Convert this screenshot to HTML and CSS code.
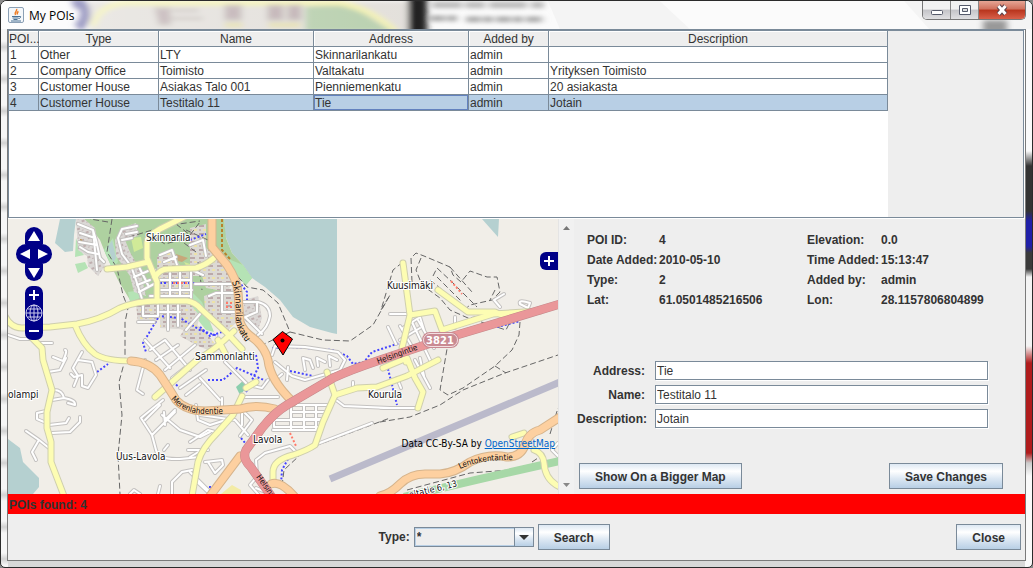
FILE: index.html
```html
<!DOCTYPE html>
<html lang="en">
<head>
<meta charset="UTF-8">
<title>My POIs</title>
<link rel="stylesheet" href="styles.css">
</head>
<body>

<div class="window">

<!-- title bar -->
<div class="titlebar">
    <svg class="glass" viewBox="0 0 1033 29" preserveAspectRatio="none" aria-hidden="true">
        <defs>
            <filter id="soft" x="-10%" y="-50%" width="120%" height="200%"><feGaussianBlur stdDeviation="3 2"/></filter>
            <linearGradient id="shine" x1="0" x2="1">
                <stop offset="0" stop-color="#fff" stop-opacity=".9"/>
                <stop offset=".09" stop-color="#fff" stop-opacity=".3"/>
                <stop offset="1" stop-color="#fff" stop-opacity="0"/>
            </linearGradient>
        </defs>
        <rect width="1033" height="29" fill="#fbfbfb"/>
        <g filter="url(#soft)">
            <path d="M88 0H410V32H88z" fill="#e3e0db"/>
            <path d="M305 6L350 4L392 32H305z" fill="#b9d0af"/>
            <path d="M92 26Q98 4 125 2H340Q370 8 396 32" fill="none" stroke="#f3f1b4" stroke-width="6"/>
            <path d="M155 8h14v16h-10zM170 18h32M172 10h26M225 5h15v14h-15zM268 5h14v14h-14zM288 5h12v14h-12z" fill="#c0b0b4" stroke="#c8c0bc" stroke-width="3"/>
            <path d="M224 25h18M268 25h32" stroke="#e5dea0" stroke-width="4"/>
            <path d="M72 4q10-5 12 6q2 10-7 18" fill="none" stroke="#7d7bb0" stroke-width="10"/>
            <path d="M408 -4h19v40h-19z" fill="#222"/>
            <path d="M432 4h112" stroke="#bbb" stroke-width="7" stroke-dasharray="30 3 20 4 38 4"/>
            <path d="M430 18h30M466 19h78" stroke="#aaa" stroke-width="6" stroke-dasharray="15 2 10 3"/>
            <path d="M984 20h24v14h-24z" fill="#444"/>
        </g>
        <path d="M548 0H660L690 29H560zM905 0H1033V29H930z" fill="#eee" opacity=".5"/>
        <rect width="420" height="29" fill="url(#shine)"/>
    </svg>
    <svg class="java" viewBox="0 0 16 16" aria-hidden="true">
        <rect x=".5" y=".5" width="15" height="15" rx="1.5" fill="#f4f7fa" stroke="#8ba0b5"/>
        <path d="M8.500 2C10 4 5.500 5 7.500 8M10.500 4.500C8.500 5.500 9 6.500 9.500 7.500" fill="none" stroke="#ee7b22" stroke-width="1.500"/>
        <path d="M4 9.500h7M4.500 11h6M5.500 12.500h4M11 9.500q2.500-.5 1.500 1q-.5 1-2 1M3 14h10" fill="none" stroke="#4a7296"/>
    </svg>
    <h1 class="caption">My POIs</h1>
    <div class="winbuttons">
        <button class="win" aria-label="Minimize"><svg width="14" height="16" viewBox="0 0 14 16"><rect x="1.500" y="8.500" width="11" height="4" rx="1" fill="#fff" stroke="#555a6a"/></svg></button>
        <button class="win" aria-label="Maximize"><svg width="14" height="16" viewBox="0 0 14 16"><path d="M1.500 3.500h11v9h-11z" fill="#fff" stroke="#555a6a"/><path d="M4.500 6.500h5v3h-5z" fill="#ddd" stroke="#555a6a"/></svg></button>
        <button class="win close" aria-label="Close window"><svg width="14" height="16" viewBox="0 0 14 16"><path d="M3.500 4L10.500 12M10.500 4L3.500 12" stroke="#5a4048" stroke-width="5"/><path d="M3.500 4L10.500 12M10.500 4L3.500 12" stroke="#fff" stroke-width="3"/></svg></button>
    </div>
</div>

<div class="client">

<!-- list of POIs -->
<div class="list">
    <div class="sheet">
    <table class="pois">
        <colgroup><col class="c-id"><col class="c-type"><col class="c-name"><col class="c-name"><col class="c-by"><col></colgroup>
        <thead>
            <tr><th>POI...</th><th>Type</th><th>Name</th><th>Address</th><th>Added by</th><th>Description</th></tr>
        </thead>
        <tbody>
            <tr><td>1</td><td>Other</td><td>LTY</td><td>Skinnarilankatu</td><td>admin</td><td></td></tr>
            <tr><td>2</td><td>Company Office</td><td>Toimisto</td><td>Valtakatu</td><td>admin</td><td>Yrityksen Toimisto</td></tr>
            <tr><td>3</td><td>Customer House</td><td>Asiakas Talo 001</td><td>Pienniemenkatu</td><td>admin</td><td>20 asiakasta</td></tr>
            <tr class="selected"><td>4</td><td>Customer House</td><td>Testitalo 11</td><td class="focused">Tie</td><td>admin</td><td>Jotain</td></tr>
        </tbody>
    </table>
    </div>
    <div class="filler"></div>
</div>

<div class="lower">

<!-- map -->
<div class="map">
    <svg class="tiles" viewBox="8 219 550 275" preserveAspectRatio="xMidYMid slice" role="img" aria-label="Map">
        <defs>
            <pattern id="houses" width="7" height="6" patternUnits="userSpaceOnUse" patternTransform="rotate(-20)">
                <rect width="7" height="6" fill="#dbd8d6"/>
                <rect x="1" y="1" width="3" height="2" fill="#bfaeae"/>
                <rect x="5" y="4" width="2" height="1" fill="#c4b6b6"/>
            </pattern>
            <pattern id="blocks" width="9" height="8" patternUnits="userSpaceOnUse">
                <rect width="9" height="8" fill="#dcd9d4"/>
                <rect x="1" y="1" width="5" height="2" fill="#bba9a9"/>
                <rect x="5" y="5" width="3" height="2" fill="#ece2a8"/>
                <rect x="1" y="5" width="2" height="2" fill="#c9b9b5"/>
            </pattern>
            <g id="minor">
                <path d="M78 224L93 230L96 240L100 258L104 262M80 233L95 238M79 242L97 245M80 247L88 252L98 254M93 230L97 270"/>
                <path d="M137 226L122 229L118 238L122 254L131 266L136 280L142 299M137 232L126 234M122 240L132 238M138 265L148 285M134 277L148 271M137 285L150 280M139 292L154 284"/>
                <path d="M155 283V270M160 255L172 250L178 268M164 262L176 257M170 268V295M180 268V296M191 270V298M160 280H191M160 290H192M150 296H190"/>
                <path d="M143 316V303M143 316H158V303M168 302V330M178 303V326M160 312H180M186 330L200 314M138 322H154"/>
                <path d="M190 245L203 240L206 256M203 275L192 270M195 284H232M209 296L216 293H238M222 286V312M243 302H258Q270 305 270 316Q268 328 258 335M222 312H240M246 318L262 334M257 302V312L243 318"/>
                <path d="M8 335L20 339H32M40 343H52M53 357L63 361Q68 350 65 350M82 352L73 368L78 376L74 386M78 360L92 362L96 375L88 388L82 386L82 375L74 377L71 374"/>
                <path d="M48 372L60 370L66 358M52 390Q62 389 64 398L52 400M64 398Q76 400 75 405L68 403M46 411L37 413V419L44 422M49 425L66 423L69 418M52 433L70 432L80 422L80 417M49 448L39 440L26 431M39 440L32 452L36 460"/>
                <path d="M145 340L170 368M150 350L165 340L190 370M156 360L178 345M165 370L195 345M172 378L200 356M180 388L206 370M186 395L200 384M145 360L137 390L143 394M150 368L160 376"/>
                <path d="M163 400L141 418L152 435L156 450Q158 460 180 459L200 457M152 435L175 412M145 420L160 405M162 415L180 430L200 437L210 432M165 425L164 412M175 410L165 420M188 450H208M164 450L168 445M198 420L210 425L232 418M196 405L198 420"/>
                <path d="M200 378L220 400M200 415L235 420L248 435M222 411V398M242 425V410L252 420L240 436M243 397H278M190 442L208 430L215 432M190 457L205 448M205 462L222 460L223 465L215 473L208 462M190 472L208 490M172 494L172 482L182 472L192 470M158 494L160 486M130 494L134 490L140 494M195 480L210 494"/>
                <path d="M272 355L275 346L305 347L338 352L345 360L340 370L305 380L292 376L275 362M287 380L288 367M305 370L303 358L310 360L313 368M318 366L317 358L325 362M330 366L329 356L337 360M225 362L248 385L262 388L268 380M275 380L282 374"/>
                <path d="M273 420H322V427H274V420M291 405H328M291 405V430M304 405V430M316 405V430M291 412H326M291 419H323M273 430H318M317 444L372 423M257 475L256 460L265 453L290 446L296 452M256 478L250 485L258 494M336 400L344 406L390 408M353 382V390M380 408H418"/>
                <path d="M390 314H410M388 327L396 344M403 328L420 317L424 330M400 326L414 350M412 322L430 360M418 320L434 348M400 340L420 328M408 350L424 344M415 360L430 388M420 358L424 376M455 317V328M500 307L494 300L504 294M520 304Q518 299 530 303L528 308L520 304M397 378L401 388"/>
                <path d="M558 443L552 450L558 456M270 494L256 488"/>
            </g>
            <g id="yellow">
                <path d="M4 314Q10 328 22 328L50 327L77 324Q100 320 120 308Q137 301 157 301H187Q195 302 201 309L227 333L242 349"/>
                <path d="M75 325Q83 345 95 354Q105 361 133 361"/>
                <path d="M30 336L42 348L43 360L52 390L47 412V428L51 442V462L64 496"/>
                <path d="M107 269L127 267L148 262M184 217L160 229Q147 236 147 242V258L157 282V301"/>
                <path d="M155 277Q160 269 168 269L196 268Q206 265 214 258"/>
                <path d="M234 331Q215 350 197 360L155 397M226 355L218 340M246 388L256 382"/>
                <path d="M242 396L233 415L217 433Q202 448 198 462L192 496"/>
                <path d="M327 372L335 395L323 422L315 445Q308 450 293 455Q273 460 273 472V483"/>
                <path d="M335 395L357 388L377 387L407 376L438 360M383 368L407 358L415 378L423 392L418 408"/>
                <path d="M403 263L410 315L402 348L406 362M410 315L435 311L442 330L493 314L540 311"/>
                <path d="M438 290L468 312H495L506 317M534 450Q543 453 544 463Q545 480 560 487M512 437L524 433"/>
            </g>
            <g id="orange">
                <path d="M212 217V247L227 265Q237 280 238 292L240 322Q243 331 253 338Q265 347 268 360Q270 380 293 402"/>
                <path d="M131 361Q150 362 160 375Q170 390 176 400Q186 411 205 411L240 409Q256 404 275 409"/>
                <path d="M240 456L210 496M271 484Q280 480 294 496"/>
                <path d="M380 496Q390 494 400 484Q410 474 425 474H440Q455 473 470 462Q488 453 507 457Q521 457 525 445Q528 433 540 430L560 417"/>
            </g>
            <path id="red" d="M560 304L497 323L440 340L380 360Q350 370 333 378L287 405Q275 412 262 428L246 450Q242 458 250 466L274 500"/>
        </defs>

        <rect x="8" y="219" width="550" height="275" fill="#f1eee8"/>
        <path d="M60 219L55 243L65 252L73 251L74 235L76 219zM224 219H337V334L332 333L310 327L293 317L280 300L265 287L252 278L243 265L232 253L225 235zM482 219H499L498 237L490 228zM8 439L20 448L23 462L39 478V487L33 494H8z" fill="#b5d0d0"/>

        <!-- woods and parks -->
        <path d="M84 219H224L226 238L232 253L243 265L252 278L246 285L236 275L226 290L228 300L212 296L205 310L190 322L180 315L170 300L150 303L130 300L118 280L106 255L100 240z" fill="#aed1a0"/>
        <path d="M75 264L85 262L88 268L78 273zM76 238L80 250L84 255L75 257zM128 292L142 290L140 298L130 302z" fill="#b5e3b5"/>
        <path d="M226 258L243 265L252 278L246 285L236 275zM104 250L113 238L118 262L112 268zM190 290L202 302L214 332L206 330L194 315zM244 316L254 310L256 322L246 320z" fill="#b5e3b5"/>
        <path d="M131 238L141 237L143 248L134 252zM184 262l12 4l-6 6z" fill="#d0ea98"/>
        <path d="M108 247L113 262L116 258L112 240z" fill="#b5d0d0"/>
        <path d="M176 254L188 258L182 262L178 261z" fill="#c7a77a"/>
        <path d="M236 387l8-7l4 6l-8 9z" fill="#8ccfae"/>
        <path d="M221 494L232 485L241 490V494z" fill="#f3eba5"/>

        <!-- built up areas -->
        <path d="M76 219H84L95 228L98 245L105 266L98 276L88 266L87 256L78 250z" fill="url(#houses)"/>
        <path d="M115 240L122 228L136 223L138 236L125 240L130 252L140 270L146 296L134 292L130 276L116 256z" fill="url(#houses)"/>
        <path d="M157 257L172 250L180 266H192V298H158z" fill="url(#blocks)"/>
        <path d="M136 304H157V322L138 324zM160 304H190L200 316L196 330L160 328z" fill="url(#blocks)"/>
        <path d="M190 228L206 224V248L224 264L232 282L228 292L206 288L202 276H190z" fill="url(#blocks)"/>
        <path d="M204 296L222 290L236 288L237 322L228 330L205 310z" fill="url(#blocks)"/>
        <path d="M244 300L258 296L262 318L258 330L244 320z" fill="url(#houses)"/>
        <path d="M180 336L190 320L204 330L220 350L208 350L198 346z" fill="url(#blocks)"/>

        <path d="M84 234l3 3M80 240l2 1M222 219V250L230 259" fill="none" stroke="#b8822a" stroke-width="2" stroke-dasharray="3 2"/>
        <path d="M330 479L560 382" stroke="#bbbacb" stroke-width="7"/>

        <!-- footpaths -->
        <g class="track">
            <path d="M112 219L107 252L117 268L123 295L128 308L125 322V360L119 382L122 415L118 455L120 494"/>
            <path d="M232 270L247 287L263 290L278 303L290 332L323 340L350 341L373 325L390 295L381 310L393 270L403 262M290 332L262 345"/>
            <path d="M412 282L411 258L416 253L424 256L450 267L453 275L461 282L470 271L487 277L497 277L500 292L492 300L470 305L462 312M421 258L416 270L422 285L440 298L450 310L468 318L490 315"/>
            <path d="M433 276L437 268L452 282L477 307M437 277L462 302M430 280L445 292M455 325L475 320L506 330L512 318M495 290L490 300M450 267L472 292"/>
            <path d="M520 322L519 335L512 350L495 366L463 388L448 395L440 390L447 349M495 366L506 373M380 422L410 417L440 405L463 390L505 373L558 355M315 446L390 418M282 486L284 470L300 455"/>
            <path d="M407 490L470 473L510 470M550 434L558 408M532 462L544 454"/>
            <path d="M120 240L165 226L200 221M152 236L165 244L180 240L196 252M186 230L208 240M198 262L202 290M108 222L90 219M176 224L190 235L200 222"/>
        </g>
        <g class="cycle">
            <path d="M158 318L143 343L146 352M158 316L180 318L200 330L218 336M194 283H240L247 292V302M160 283H200M190 240L206 234M272 348L292 347L333 350L347 356L353 364L364 362L372 352L400 343"/>
            <path d="M208 380L223 380L237 368L266 381M256 355L258 368L252 380M290 371L313 376M387 365L397 405M288 459L282 470L281 484M497 327L520 321M97 372L108 364M200 327L210 336L222 332M241 438L246 444M246 392L250 384M210 486V494M173 382L180 388"/>
        </g>

        <!-- roads -->
        <use href="#minor" class="road minor-edge"/>
        <use href="#minor" class="road minor-fill"/>
        <path d="M404 497L480 479L560 461" fill="none" stroke="#a7d8a7" stroke-width="8"/>
        <use href="#yellow" class="road yellow-edge"/>
        <use href="#yellow" class="road yellow-fill"/>
        <use href="#orange" class="road orange-edge"/>
        <use href="#orange" class="road orange-fill"/>
        <use href="#red" class="road red-edge"/>
        <use href="#red" class="road red-fill"/>
        <path d="M173 283H188M227 302V310M231 302V310M451 281L462 294M290 433L296 446" fill="none" stroke="#ff7a6a" stroke-width="2" stroke-dasharray="2 2"/>

        <!-- place and street names -->
        <g class="place">
            <text x="146" y="241">Skinnarila</text>
            <text x="195" y="360">Sammonlahti</text>
            <text x="387" y="289">Kuusimäki</text>
            <text x="368" y="398">Kourula</text>
            <text x="253" y="443">Lavola</text>
            <text x="116" y="460">Uus-Lavola</text>
            <text x="8" y="398">olampi</text>
        </g>
        <defs>
            <path id="n1" d="M232 282Q236 292 236 322Q240 340 260 356"/>
            <path id="n2" d="M171 399Q184 414 205 414H236"/>
            <path id="n3" d="M378 364L430 345"/>
            <path id="n4" d="M460 469Q485 457 526 461"/>
            <path id="n5" d="M410 498L475 482"/>
            <path id="n6" d="M256 477L286 519"/>
        </defs>
        <g class="street">
            <text class="long"><textPath href="#n1">Skinnarilankatu</textPath></text>
            <text><textPath href="#n2">Merenlahdentie</textPath></text>
            <text><textPath href="#n3">Helsingintie</textPath></text>
            <text><textPath href="#n4">Lentokentäntie</textPath></text>
            <text><textPath href="#n6">Helsingintie</textPath></text>
            <text class="trunk"><textPath href="#n5">altatie 6, 13</textPath></text>
        </g>
        <rect x="422" y="332" width="37" height="16" rx="8" fill="#c98a92"/>
        <rect x="423.500" y="333.500" width="34" height="13" rx="6.500" fill="none" stroke="#f3dfe1"/>
        <text class="shield" x="440" y="344">3821</text>

        <path d="M282.500 331.500L292.500 339L283 355L273 339.500z" fill="#f00" stroke="#000"/>
        <circle cx="282.500" cy="340.500" r="2" fill="#000"/>
    </svg>

    <div class="controls">
        <div class="pan">
            <button class="nav up" aria-label="Pan up"><svg width="12" height="10" viewBox="0 0 12 10"><path d="M6 0L12 10H0z"/></svg></button>
            <div class="sides">
                <button class="nav left" aria-label="Pan left"><svg width="10" height="12" viewBox="0 0 10 12"><path d="M0 6L10 1V11z"/></svg></button>
                <button class="nav right" aria-label="Pan right"><svg width="10" height="12" viewBox="0 0 10 12"><path d="M10 6L0 1V11z"/></svg></button>
            </div>
            <button class="nav down" aria-label="Pan down"><svg width="12" height="10" viewBox="0 0 12 10"><path d="M6 10L12 0H0z"/></svg></button>
        </div>
        <div class="zoom">
            <button class="nav" aria-label="Zoom in"><svg width="10" height="10" viewBox="0 0 10 10"><path d="M4 0h2v4h4v2H6v4H4V6H0V4h4z"/></svg></button>
            <button class="nav" aria-label="Zoom to world"><svg width="18" height="18" viewBox="0 0 18 18"><g fill="none" stroke="#ccccec"><circle cx="9" cy="9" r="8"/><ellipse cx="9" cy="9" rx="4" ry="8"/><path d="M9 1V17M1 9H17M2.500 5H15.500M2.500 13H15.500"/></g></svg></button>
            <button class="nav" aria-label="Zoom out"><svg width="10" height="10" viewBox="0 0 10 10"><path d="M0 4h10v2H0z"/></svg></button>
        </div>
    </div>
    <button class="nav layers" aria-label="Show layers"><svg width="10" height="10" viewBox="0 0 10 10"><path d="M4 0h2v4h4v2H6v4H4V6H0V4h4z"/></svg></button>
    <p class="credit">Data CC-By-SA by <a href="#">OpenStreetMap</a></p>
</div>

<div class="scroll">
    <svg width="7" height="4" viewBox="0 0 7 4"><path d="M3.500 0L7 4H0z" fill="#777"/></svg>
    <svg width="7" height="4" viewBox="0 0 7 4"><path d="M3.500 4L7 0H0z" fill="#888"/></svg>
</div>

<!-- details of the selected POI -->
<div class="details">
    <dl class="facts">
        <dt>POI ID:</dt><dd>4</dd><dt>Elevation:</dt><dd>0.0</dd>
        <dt>Date Added:</dt><dd>2010-05-10</dd><dt>Time Added:</dt><dd>15:13:47</dd>
        <dt>Type:</dt><dd>2</dd><dt>Added by:</dt><dd>admin</dd>
        <dt>Lat:</dt><dd>61.0501485216506</dd><dt>Lon:</dt><dd>28.1157806804899</dd>
    </dl>
    <form class="edit">
        <label for="address">Address:</label><input type="text" id="address" value="Tie">
        <label for="name">Name:</label><input type="text" id="name" value="Testitalo 11">
        <label for="description">Description:</label><input type="text" id="description" value="Jotain">
    </form>
    <div class="actions">
        <button class="btn">Show On a Bigger Map</button>
        <button class="btn">Save Changes</button>
    </div>
</div>

</div>

<div class="status">POIs found: 4</div>

<!-- search -->
<div class="footer">
    <div class="search">
        <label for="type">Type:</label>
        <div class="combo">
            <select id="type"><option>*</option></select>
            <span class="arrow"><svg width="10" height="5" viewBox="0 0 10 5"><path d="M0 0H10L5 5z" fill="#333"/></svg></span>
        </div>
        <button class="btn">Search</button>
    </div>
    <button class="btn">Close</button>
</div>

</div>
</div>

</body>
</html>
```

FILE: styles.css
```css
* {
    box-sizing: border-box;
}

body {
    margin: 0;
    background-color: #8a8a8a;
    font-family: "Liberation Sans", Arial, sans-serif;
    font-size: 12px;
    color: #333;
}

button, input, select {
    font-family: inherit;
    font-size: 12px;
    color: #333;
    margin: 0;
}

.window {
    display: flex;
    flex-direction: column;
    min-height: 100vh;
    border: 1px solid #2b2b2b;
    border-radius: 7px 7px 5px 5px;
    overflow: hidden;
    padding: 0 6px 6px;
    background:
        linear-gradient(#fafafa 0 150px, #333 165px 210px, #2020a8 220px 245px, #3a3a3a 252px 268px, #f4f4f4 276px 345px, #b01c1c 362px 452px, #ccc 462px, #fafafa 475px) right / 7px 100% no-repeat,
        repeating-linear-gradient(#f6f6f6 0 8px, #d2d2d2 14px, #f6f6f6 20px 32px) left / 7px 100% no-repeat,
        linear-gradient(#e6e6e6, #d8d8d8);
}

/* title bar */
.titlebar {
    position: relative;
    display: flex;
    align-items: center;
    height: 28px;
    margin: 0 -6px;
    padding-left: 7px;
}

.glass {
    position: absolute;
    top: 0;
    left: 0;
    width: 100%;
    height: 100%;
}

.java {
    position: relative;
    width: 16px;
    height: 16px;
}

.caption {
    position: relative;
    flex: 1;
    margin: 0 0 0 5px;
    font: 12px "Open Sans", sans-serif;
    color: #000;
}

.winbuttons {
    position: relative;
    align-self: flex-start;
    display: flex;
    height: 19px;
    margin-right: 6px;
    border: 1px solid #777;
    border-top: 0;
    border-radius: 0 0 5px 5px;
    overflow: hidden;
}

.win {
    display: flex;
    align-items: center;
    justify-content: center;
    width: 28px;
    padding: 0;
    border: 0;
    border-right: 1px solid #888;
    background: linear-gradient(#f2f2f2 45%, #c4c4c8 50%, #e0e0e2);
}

.win.close {
    width: 46px;
    border-right: 0;
    background: linear-gradient(#e6a595, #d0705c 45%, #b8341c 50%, #d8604a);
}

.client {
    flex: 1;
    display: flex;
    flex-direction: column;
    border: 1px solid #7a7a7a;
    border-top-color: #7a8a99;
    background-color: #eee;
}

/* list of POIs */
.list {
    display: flex;
    height: 188px;
    border: 1px solid #7a8a99;
    box-shadow: 1px 0 0 #fff;
    margin-right: 1px;
}

.sheet {
    flex: 879;
    background-color: #fff;
}

.filler {
    flex: 135;
}

.pois {
    width: 100%;
    table-layout: fixed;
    border-collapse: separate;
    border-spacing: 0;
}

.c-id {
    width: 30px;
}

.c-type {
    width: 120px;
}

.c-name {
    width: 155px;
}

.c-by {
    width: 80px;
}

.pois th, .pois td {
    height: 16px;
    padding: 2px 0 0 1px;
    border-right: 1px solid #7a8a99;
    border-bottom: 1px solid #7a8a99;
    line-height: 13px;
    white-space: nowrap;
}

.pois th {
    padding-left: 0;
    background-color: #eee;
    box-shadow: inset 1px 1px 0 #fff;
    font-weight: normal;
}

.selected {
    background-color: #b8cfe5;
}

.pois .focused {
    box-shadow: inset 0 0 0 1px #6382bf;
}

.lower {
    flex: 1;
    display: grid;
    grid-template-columns: minmax(0, 550fr) 16px minmax(0, 451fr);
    min-height: 276px;
    border-top: 1px solid #fff;
}

/* map */
.map {
    position: relative;
    overflow: hidden;
    background-color: #f1eee8;
}

.tiles {
    position: absolute;
    width: 100%;
    height: 100%;
}

.road {
    fill: none;
    stroke-linecap: round;
    stroke-linejoin: round;
}

.minor-edge {
    stroke: #c4c2c0;
    stroke-width: 4px;
}

.minor-fill {
    stroke: #fff;
    stroke-width: 2px;
}

.yellow-edge {
    stroke: #cfcfae;
    stroke-width: 7px;
}

.yellow-fill {
    stroke: #fdfdb3;
    stroke-width: 5px;
}

.orange-edge {
    stroke: #d6b48c;
    stroke-width: 9px;
}

.orange-fill {
    stroke: #fdd0a0;
    stroke-width: 7px;
}

.red-edge {
    stroke: #c4888a;
    stroke-width: 9px;
}

.red-fill {
    stroke: #ea9799;
    stroke-width: 8px;
}

.track {
    fill: none;
    stroke: #666;
    stroke-dasharray: 6 3;
}

.cycle {
    fill: none;
    stroke: #44f;
    stroke-width: 2px;
    stroke-dasharray: 2 2;
}

.place, .street {
    font-family: "DejaVu Sans Condensed", "DejaVu Sans", sans-serif;
    font-size: 10px;
    fill: #111;
    stroke: #fff;
    stroke-width: 2px;
    paint-order: stroke;
}

.street {
    font-size: 8px;
    stroke-width: 0;
}

.street .long {
    font-size: 9px;
}

.street .trunk {
    font-size: 9px;
    stroke-width: 2px;
}

.shield {
    font: bold 10px "DejaVu Sans", sans-serif;
    fill: #fff;
    text-anchor: middle;
}

.controls {
    position: absolute;
    top: 8px;
    left: 8px;
    display: flex;
    flex-direction: column;
    align-items: center;
    gap: 5px;
}

.pan {
    display: flex;
    flex-direction: column;
    align-items: center;
}

.sides {
    display: flex;
    border-radius: 10px;
    overflow: hidden;
}

.zoom {
    display: flex;
    flex-direction: column;
    border-radius: 7px;
    overflow: hidden;
}

.nav {
    display: flex;
    align-items: center;
    justify-content: center;
    width: 18px;
    height: 18px;
    padding: 0;
    border: 0;
    background-color: #000087;
    fill: #fff;
}

.up {
    height: 17px;
    border-radius: 9px 9px 0 0;
}

.down {
    height: 17px;
    border-radius: 0 0 9px 9px;
}

.left, .right {
    height: 20px;
}

.layers {
    position: absolute;
    top: 33px;
    right: 0;
    border-radius: 6px 0 0 6px;
}

.credit {
    position: absolute;
    right: 3px;
    bottom: 44px;
    margin: 0;
    font: 10px "DejaVu Sans Condensed", "DejaVu Sans", sans-serif;
    line-height: 12px;
    color: #000;
}

.credit a {
    color: #0066cc;
}

.scroll {
    display: flex;
    flex-direction: column;
    justify-content: space-between;
    align-items: center;
    padding: 7px 0;
    border-left: 1px solid #e4e4e4;
    background-color: #f1f1f1;
}

/* details */
.details {
    display: flex;
    flex-direction: column;
    padding: 11px 22px 5px 3px;
}

.facts {
    display: grid;
    grid-template-columns: 72px 148px 74px 1fr;
    margin: 0 0 0 10px;
    line-height: 20px;
    font-weight: bold;
    white-space: nowrap;
}

.facts dd {
    margin: 0;
}

.edit {
    display: grid;
    grid-template-columns: 68px 1fr;
    gap: 5px 10px;
    margin: 51px 15px 0 0;
}

.edit label {
    align-self: center;
    text-align: right;
    font-weight: bold;
}

.edit input {
    min-width: 0;
    height: 19px;
    padding: 1px 1px 0;
    border: 1px solid #7a8a99;
    box-shadow: 1px 1px 0 #fff;
    background-color: #fff;
}

.actions {
    display: flex;
    justify-content: space-between;
    margin-top: auto;
    padding-left: 2px;
}

.btn {
    height: 26px;
    padding: 1px 15px 0;
    border: 1px solid #7a8a99;
    background: linear-gradient(#dde8f3, #fff 30%, #dde8f3 60%, #b8cfe5);
    font-weight: bold;
}

.status {
    height: 20px;
    padding-left: 1px;
    background-color: #f00;
    line-height: 22px;
    font-weight: bold;
}

/* search */
.footer {
    display: flex;
    align-items: center;
    height: 46px;
    padding-right: 4px;
}

.search {
    flex: 1;
    display: flex;
    align-items: center;
    justify-content: center;
    gap: 4px;
    padding-left: 24px;
}

.search label {
    font-weight: bold;
}

.combo {
    position: relative;
    width: 120px;
    height: 20px;
}

.combo select {
    width: 100%;
    height: 100%;
    padding: 0 20px 0 2px;
    border: 1px solid #7a8a99;
    border-radius: 0;
    box-shadow: inset 0 0 0 1px #b8cfe5;
    appearance: none;
    background-color: #eee;
    font-weight: bold;
}

.arrow {
    position: absolute;
    top: 0;
    right: 0;
    display: flex;
    align-items: center;
    justify-content: center;
    width: 20px;
    height: 20px;
    border: 1px solid #7a8a99;
    background: linear-gradient(#dde8f3, #fff 30%, #dde8f3 60%, #b8cfe5);
    pointer-events: none;
}
```
